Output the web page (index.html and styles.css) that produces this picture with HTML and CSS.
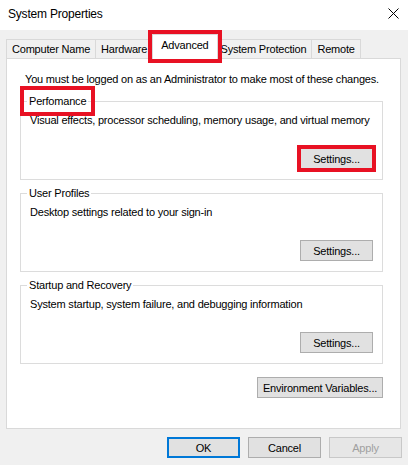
FILE: index.html
```html
<!DOCTYPE html>
<html lang="en">

<head>
    <meta charset="UTF-8">
    <meta name="viewport" content="width=device-width, initial-scale=1.0">
    <title>System Properties</title>
    <link rel="stylesheet" href="styles.css">
</head>

<body>
    <div class="window">
        <div class="titlebar">
            <span class="title">System Properties</span>
            <svg class="close" width="11" height="11" viewBox="0 0 11 11">
                <path d="M0.5 0.5 L10.5 10.5 M10.5 0.5 L0.5 10.5" stroke="#000" stroke-width="1" fill="none" />
            </svg>
        </div>

        <div class="tabs">
            <div class="tab">Computer Name</div>
            <div class="tab">Hardware</div>
            <div class="tab active marked">Advanced</div>
            <div class="tab">System Protection</div>
            <div class="tab">Remote</div>
        </div>

        <div class="panel">
            <p class="notice">You must be logged on as an Administrator to make most of these changes.</p>

            <fieldset class="group">
                <legend class="marked">Perfomance</legend>
                <p>Visual effects, processor scheduling, memory usage, and virtual memory</p>
                <div class="actions">
                    <button class="marked">Settings...</button>
                </div>
            </fieldset>

            <fieldset class="group">
                <legend>User Profiles</legend>
                <p>Desktop settings related to your sign-in</p>
                <div class="actions">
                    <button>Settings...</button>
                </div>
            </fieldset>

            <fieldset class="group">
                <legend>Startup and Recovery</legend>
                <p>System startup, system failure, and debugging information</p>
                <div class="actions">
                    <button>Settings...</button>
                </div>
            </fieldset>

            <div class="env-row">
                <button class="wide">Environment Variables...</button>
            </div>
        </div>

        <div class="footer">
            <button class="default">OK</button>
            <button>Cancel</button>
            <button disabled>Apply</button>
        </div>
    </div>
</body>

</html>
```

FILE: styles.css
```css
body {
    margin: 0;
    background-color: #f0f0f0;
    font-family: "Liberation Sans", Arial, sans-serif;
    font-size: 11px;
    letter-spacing: -0.2px;
    color: #000;
    white-space: nowrap;
}

.window {
    width: 408px;
    height: 465px;
    background-color: #f0f0f0;
}

.titlebar {
    height: 30px;
    background-color: #fff;
    display: flex;
    align-items: center;
    justify-content: space-between;
    padding: 0 9px 0 8px;
    box-sizing: border-box;
}

.title {
    font-size: 12px;
    margin-top: -2px;
}

.close {
    margin-top: -3px;
}

.tabs {
    display: flex;
    align-items: flex-end;
    padding: 9px 0 0 6px;
    height: 28px;
    box-sizing: border-box;
    position: relative;
    z-index: 1;
}

.tab {
    height: 18px;
    line-height: 18px;
    padding: 0 5px;
    border: 1px solid #d9d9d9;
    border-bottom: none;
    margin-right: -1px;
    background-color: #f0f0f0;
}

.tab.active {
    height: 24px;
    line-height: 20px;
    background-color: #fff;
    margin: 0 -3px -1px 0;
    padding: 0 8px;
    position: relative;
    z-index: 1;
}

.marked {
    outline: 4px solid #e81123;
    outline-offset: -1px;
}

.tab.marked {
    outline-offset: 0;
}

.panel {
    margin: 0 7px 0 6px;
    height: 371px;
    box-sizing: border-box;
    border: 1px solid #d9d9d9;
    background-color: #fff;
    padding: 12px 18px 0 13px;
}

.notice {
    margin: 0 0 6px 5px;
    line-height: 16px;
}

.group {
    margin: 0 0 5px 0;
    padding: 0 9px 10px 6px;
    border: 1px solid #dcdcdc;
    width: 363px;
    box-sizing: border-box;
}

.group legend {
    padding: 0 2px;
    line-height: 16px;
}

.group legend.marked {
    outline-offset: 3px;
}

.group p {
    margin: 3px 0 0 3px;
    line-height: 16px;
}

.actions {
    display: flex;
    justify-content: flex-end;
    margin-top: 20px;
}

button {
    font-family: inherit;
    font-size: 11px;
    letter-spacing: -0.2px;
    color: #000;
    background-color: #e1e1e1;
    border: 1px solid #adadad;
    height: 21px;
    width: 73px;
    padding: 0;
}

button.wide {
    width: 126px;
}

button.default {
    border: 2px solid #0078d7;
}

button:disabled {
    color: #a0a0a0;
    background-color: #e6e6e6;
    border-color: #c8c8c8;
}

.env-row {
    display: flex;
    justify-content: flex-end;
    width: 363px;
    margin-top: 13px;
}

.footer {
    display: flex;
    justify-content: flex-end;
    gap: 8px;
    padding: 8px 6px 0 0;
}
```
